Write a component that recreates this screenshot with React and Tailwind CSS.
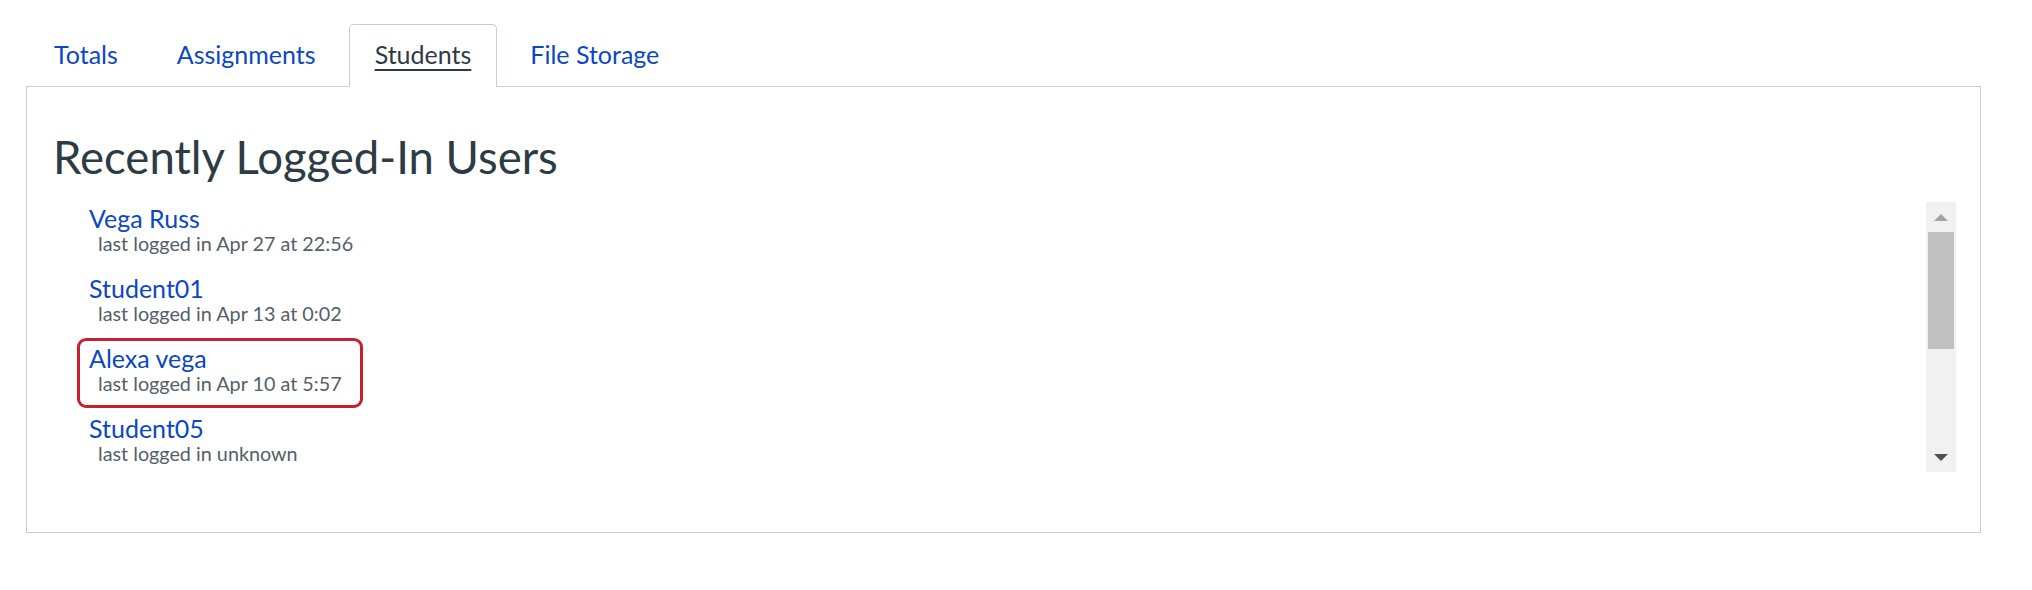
const TABS = ["Totals", "Assignments", "Students", "File Storage"]

const USERS = [
    { name: "Vega Russ", seen: "last logged in Apr 27 at 22:56" },
    { name: "Student01", seen: "last logged in Apr 13 at 0:02" },
    { name: "Alexa vega", seen: "last logged in Apr 10 at 5:57", marked: true },
    { name: "Student05", seen: "last logged in unknown" },
]

export default function App() {
    return (
        <div className="min-h-[590px] bg-white pt-[24px] pl-[26px] pr-[51px] font-['Lato','Liberation_Sans',sans-serif]">
            <nav className="flex pl-[2px]">
                {TABS.map(tab => {
                    const active = tab === "Students"
                    return (
                        <div
                            key={tab}
                            className={`relative -mb-px mr-[7px] h-[63px] rounded-t-[5px] border border-b-0 px-[25px] pt-[14px] text-[25px] leading-[31px] ${active ? "z-10 border-[#c7cdd1] bg-white text-[#2d3b45] underline decoration-[2px] underline-offset-[5px]" : "border-transparent text-[#0b47c2]"}`}
                        >
                            {tab}
                        </div>
                    )
                })}
            </nav>

            <section className="border border-[#c7cdd1] pl-[26px] pr-[24px] pt-[48px] pb-[60px]">
                <h2 className="text-[45.5px] leading-[44px] text-[#2d3b45]">Recently Logged-In Users</h2>

                <div className="mt-[19px] flex">
                    <ul className="ml-[24px] h-[274px] flex-1 overflow-hidden">
                        {USERS.map(user => (
                            <li
                                key={user.name}
                                className={`h-[70px] w-[286px] rounded-[9px] border-[3px] pl-[9px] pt-[4px] ${user.marked ? "border-[#c4202f]" : "border-transparent"}`}
                            >
                                <div className="text-[25px] leading-[26px] text-[#0b47c2]">{user.name}</div>
                                <div className="pl-[9px] text-[19.8px] leading-[24px] text-[#545f69]">{user.seen}</div>
                            </li>
                        ))}
                    </ul>

                    <div className="mt-[4px] flex h-[270px] w-[30px] flex-col items-center bg-[#f1f1f1]">
                        <div className="flex h-[30px] items-center justify-center">
                            <div className="h-0 w-0 border-x-[7px] border-b-[7px] border-x-transparent border-b-[#a3a3a3]" />
                        </div>
                        <div className="h-[117px] w-[26px] bg-[#c1c1c1]" />
                        <div className="flex-1" />
                        <div className="flex h-[30px] items-center justify-center">
                            <div className="h-0 w-0 border-x-[7px] border-t-[7px] border-x-transparent border-t-[#505050]" />
                        </div>
                    </div>
                </div>
            </section>
        </div>
    )
}
